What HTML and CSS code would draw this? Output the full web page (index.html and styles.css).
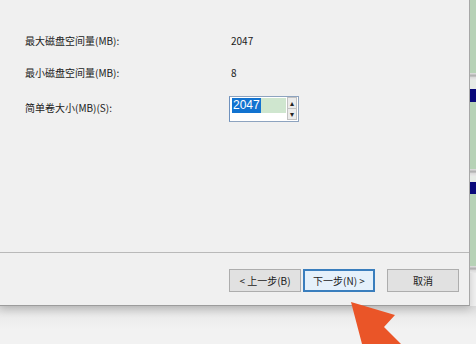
FILE: index.html
```html
<!DOCTYPE html>
<html>
<head>
<meta charset="utf-8">
<link rel="stylesheet" href="styles.css">
</head>
<body>
<div class="screen">
  <div class="dialog">
    <div class="content">
      <div class="label">最大磁盘空间量(MB):</div>
      <div class="value">2047</div>
      <div class="label">最小磁盘空间量(MB):</div>
      <div class="value">8</div>
      <div class="label label-input">简单卷大小(MB)(S):</div>
      <div class="spin">
        <div class="field">
          <div class="field-top"><span class="sel">2047</span><span class="hl"></span></div>
        </div>
        <div class="spin-btns">
          <div class="sbtn">&#9652;</div>
          <div class="sbtn">&#9662;</div>
        </div>
      </div>
    </div>
    <div class="footer">
      <button class="btn">&lt; 上一步(B)</button>
      <button class="btn btn-default">下一步(N) &gt;</button>
      <button class="btn btn-cancel">取消</button>
    </div>
  </div>
  <div class="strip">
    <div class="s-green" style="height:73px"></div>
    <div class="s-line"></div>
    <div class="s-light" style="height:9px"></div>
    <div class="s-navy" style="height:13px"></div>
    <div class="s-green" style="height:67px"></div>
    <div class="s-line"></div>
    <div class="s-light" style="height:6px"></div>
    <div class="s-navy" style="height:12px"></div>
    <div class="s-green" style="height:72px"></div>
    <div class="s-line"></div>
  </div>
  <svg class="arrow" width="476" height="344" viewBox="0 0 476 344">
    <polygon points="351,302 395,315 384,327 401,344 362,344" fill="#ea5528"/>
  </svg>
</div>
</body>
</html>
```

FILE: styles.css
```css
html, body {
  margin: 0;
  padding: 0;
}
body {
  width: 476px;
  height: 344px;
  overflow: hidden;
  background: #f2f2f2;
  font-family: "Noto Sans CJK SC", "Noto Sans", sans-serif;
  font-size: 10px;
  color: #1b1b1b;
}
.screen {
  position: relative;
  display: flex;
  align-items: flex-start;
  width: 476px;
  height: 344px;
  background: linear-gradient(#dcdcdc 0, #ececec 12px, #f2f2f2 24px) 0 306px / 100% 40px no-repeat, #f2f2f2;
}
.dialog {
  width: 469px;
  height: 305px;
  background: #f0f0f0;
  border-right: 1px solid #a7a7a7;
  border-bottom: 1px solid #9c9c9c;
  box-shadow: 0 3px 8px rgba(0,0,0,0.18);
  display: flex;
  flex-direction: column;
}
.content {
  height: 253px;
  border-bottom: 1px solid #b9b9b9;
  box-sizing: border-box;
  padding: 34px 0 0 25px;
  display: grid;
  grid-template-columns: 204px auto;
  grid-template-rows: 14px 14px 26px;
  row-gap: 18px;
  align-items: start;
}
.content > div:nth-child(5), .content > div:nth-child(6) {
  margin-top: -2px;
}
.label, .value {
  line-height: 14px;
  white-space: nowrap;
}
.value {
  padding-left: 2px;
}
.label-input {
  margin-top: 3px !important;
}
.spin {
  width: 70px;
  height: 26px;
  box-sizing: border-box;
  border: 1px solid #8da3bf;
  border-left-color: #6f91bd;
  background: #ffffff;
  display: flex;
}
.field {
  flex: 1;
  padding: 1px 0 0 2px;
}
.field-top {
  display: flex;
  height: 15px;
}
.sel {
  background: #1273d0;
  color: #fff;
  font-size: 12px;
  line-height: 15px;
  padding: 0 1px 0 1px;
  font-family: "Liberation Sans", "Noto Sans", sans-serif;
}
.hl {
  width: 25px;
  background: #cfe6cf;
}
.spin-btns {
  width: 13px;
  margin: 0 1px 1px 1px;
  display: flex;
  flex-direction: column;
}
.sbtn {
  flex: 1;
  background: #ebebeb;
  border: 1px solid #c2c2c2;
  font-size: 8px;
  line-height: 9px;
  text-align: center;
  color: #222;
}
.sbtn + .sbtn {
  border-top: none;
}
.footer {
  display: flex;
  padding: 16px 10px 0 0;
  justify-content: flex-end;
}
.btn {
  width: 72px;
  height: 23px;
  margin: 0;
  padding: 0;
  font-family: "Noto Sans CJK SC", "Noto Sans", sans-serif;
  font-size: 10px;
  color: #1b1b1b;
  background: #e1e1e1;
  border: 1px solid #adadad;
}
.btn + .btn {
  margin-left: 2px;
}
.btn-default {
  border: 2px solid #3a7ebd;
  background: #e5f1fb;
}
.btn-cancel {
  margin-left: 12px !important;
}
.strip {
  width: 6px;
  display: flex;
  flex-direction: column;
}
.s-green { background: #b6d2b6; }
.s-light { background: #e6ebe6; }
.s-navy { background: #0a0a7a; }
.s-line {
  height: 7px;
  background: linear-gradient(#e2e2e2 0, #a8a8a8 3px, #d8d8d8 4px, #e8e8e8 7px);
}
.arrow {
  position: absolute;
  left: 0;
  top: 0;
  pointer-events: none;
}
```
